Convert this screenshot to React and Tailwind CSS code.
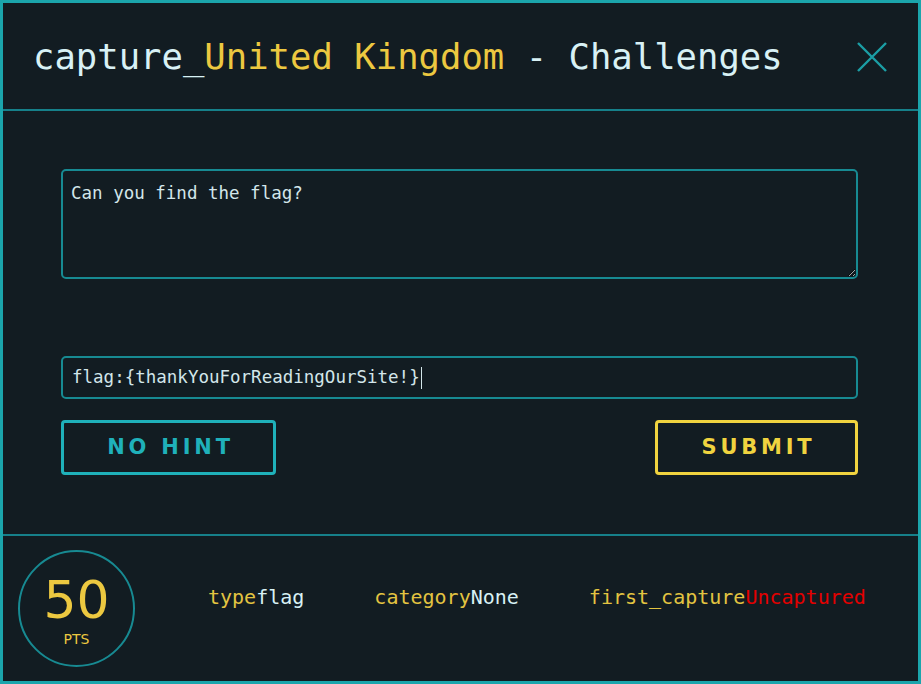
import React from "react";

const mono = { fontFamily: '"DejaVu Sans Mono", "Liberation Mono", monospace' };

const InfoItem = ({ label, value, valueClass }) => (
    <div className="text-[20px] leading-none" style={mono}>
        <span className="text-[#e3c441]">{label}</span>
        <span className={valueClass}>{value}</span>
    </div>
);

const App = () => {
    return (
        <div className="w-[921px] h-[684px] bg-[#121c22] border-[3px] border-[#1ba5ac] flex flex-col">
            {/* header */}
            <div className="h-[108px] shrink-0 border-b-2 border-[#16808a] flex items-center justify-between pl-[30px] pr-[30px]">
                <h1 className="text-[35.6px] leading-none text-[#d8f1f5] pt-[2px]" style={mono}>
                    capture_<span className="text-[#ecc840]">United Kingdom</span> - Challenges
                </h1>
                <svg width="32" height="32" viewBox="0 0 32 32" className="mt-[2px]">
                    <path d="M2 2 L30 30 M30 2 L2 30" stroke="#1b9ea5" strokeWidth="2.4" fill="none" />
                </svg>
            </div>

            {/* body */}
            <div className="flex-1 flex flex-col pl-[58px] pr-[60px] pt-[58px]">
                <textarea
                    readOnly
                    defaultValue="Can you find the flag?"
                    className="h-[110px] w-full bg-[#121c22] border-2 border-[#178a92] rounded-[5px] px-[8px] py-[11px] text-[17.5px] leading-[22px] text-[#d3e6ea] outline-none"
                    style={mono}
                />
                <div className="mt-[77px] h-[43px] w-full border-2 border-[#178a92] rounded-[5px] flex items-center px-[9px] text-[17.5px] text-[#d3e6ea]" style={mono}>
                    <span>flag:{"{thankYouForReadingOurSite!}"}</span>
                    <span className="inline-block w-[1px] h-[22px] bg-[#d3e6ea] ml-[1px]" />
                </div>
                <div className="mt-[21px] flex justify-between">
                    <button
                        className="w-[215px] h-[55px] border-[3px] border-[#1fb1ba] rounded-[4px] text-[#1fb1ba] text-[21px] font-bold tracking-[0.18em] pl-[4px]"
                        style={{ fontFamily: '"DejaVu Sans", Verdana, sans-serif' }}
                    >
                        NO HINT
                    </button>
                    <button
                        className="w-[203px] h-[55px] border-[3px] border-[#f0d33f] rounded-[4px] text-[#f0d33f] text-[21px] font-bold tracking-[0.18em] pl-[4px]"
                        style={{ fontFamily: '"DejaVu Sans", Verdana, sans-serif' }}
                    >
                        SUBMIT
                    </button>
                </div>
            </div>

            {/* footer */}
            <div className="h-[147px] shrink-0 border-t-2 border-[#16808a] flex items-center pl-[15px]">
                <div className="w-[117px] h-[117px] rounded-full border-2 border-[#178a92] flex flex-col items-center justify-center">
                    <div className="text-[52px] leading-none text-[#ecc840] mt-[2px]" style={{ fontFamily: '"DejaVu Sans", sans-serif' }}>
                        50
                    </div>
                    <div className="text-[14px] leading-none text-[#ecc840] mt-[6px]" style={{ fontFamily: '"DejaVu Sans", sans-serif' }}>
                        PTS
                    </div>
                </div>
                <div className="flex items-center ml-[73px] gap-[70px] mb-[24px]">
                    <InfoItem label="type" value="flag" valueClass="text-[#d8f1f5]" />
                    <InfoItem label="category" value="None" valueClass="text-[#d8f1f5]" />
                    <InfoItem label="first_capture" value="Uncaptured" valueClass="text-[#e30000]" />
                </div>
            </div>
        </div>
    );
};

export default App;
